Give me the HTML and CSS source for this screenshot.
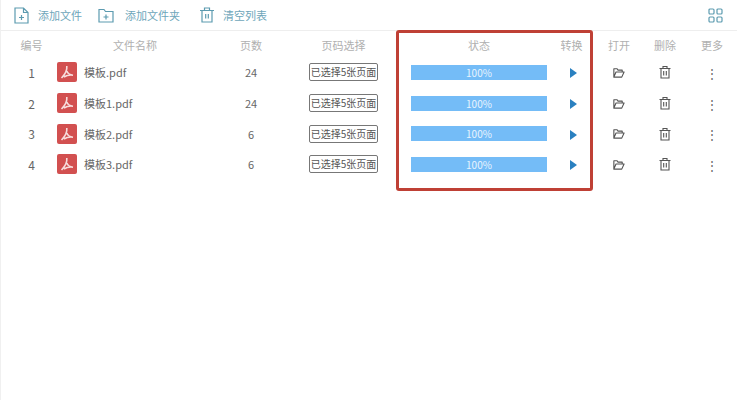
FILE: index.html
```html
<!DOCTYPE html>
<html lang="zh-CN">
<head>
    <meta charset="UTF-8">
    <meta name="viewport" content="width=device-width, initial-scale=1.0">
    <title>PDF</title>
    <link rel="stylesheet" href="styles.css">
</head>
<body>
    <svg class="defs" width="0" height="0">
        <symbol id="pdf" viewBox="0 0 20 20">
            <path d="M9.800 4c.4 3.500-1.800 8.500-5.300 12M9.800 9c1 2.500 3 4 6.200 4.200c-3-.4-6.500.2-9 1.800" fill="none" stroke="#f7dddd" stroke-width="1.600"/>
        </symbol>
        <symbol id="folder" viewBox="0 0 14 14">
            <path d="M2 12V3h3.500l1 1.500h4.500V6.500M2 12h8.500L13 6.500H4.300L2 12z" fill="none" stroke="#555" stroke-width="1.200" stroke-linejoin="round"/>
        </symbol>
        <symbol id="trash" viewBox="0 0 14 14">
            <path d="M1.500 3.500h11M5 3.500V1.500h4v2M3 3.500V13h8V3.500M5.700 6v4.500M8.300 6v4.500" fill="none" stroke="#555" stroke-width="1.100"/>
        </symbol>
    </svg>

    <div class="toolbar">
        <a class="tool">
            <svg width="15" height="17" viewBox="0 0 15 17"><path d="M1 1h8.500L14 5.500V16H1zM9.500 1v4.500H14M5 10.500h5M7.500 8v5" fill="none" stroke="#5c9bb0" stroke-width="1.200"/></svg>
            <span>添加文件</span>
        </a>
        <a class="tool tool-folder">
            <svg width="16" height="15" viewBox="0 0 16 15"><path d="M1 1.500h5l1.500 2H15V14H1zM5.500 9h5M8 6.500v5" fill="none" stroke="#5c9bb0" stroke-width="1.200"/></svg>
            <span>添加文件夹</span>
        </a>
        <a class="tool tool-clear">
            <svg width="14" height="16" viewBox="0 0 14 16"><path d="M0 3.500h14M4.500 3V1h5v2M2 3.500V15h10V3.500M5.700 7v4.500M8.300 7v4.500" fill="none" stroke="#5c9bb0" stroke-width="1.200"/></svg>
            <span>清空列表</span>
        </a>
        <svg class="view-switch" width="15" height="15" viewBox="0 0 15 15">
            <g fill="none" stroke="#5c9bb0" stroke-width="1.200">
                <rect x="1" y="1" width="5" height="5" rx="1"/>
                <rect x="9" y="1" width="5" height="5" rx="1"/>
                <rect x="1" y="9" width="5" height="5" rx="1"/>
                <rect x="9" y="9" width="5" height="5" rx="1"/>
            </g>
        </svg>
    </div>

    <div class="list">
        <div class="row head">
            <div class="num">编号</div>
            <div>文件名称</div>
            <div>页数</div>
            <div class="col-select">页码选择</div>
            <div>状态</div>
            <div>转换</div>
            <div>打开</div>
            <div>删除</div>
            <div>更多</div>
        </div>

        <div class="row">
            <div class="num">1</div>
            <div class="name"><svg class="pdf" width="20" height="20"><use href="#pdf"/></svg>模板.pdf</div>
            <div>24</div>
            <div class="col-select"><span class="pages">已选择5张页面</span></div>
            <div class="bar">100%</div>
            <div><span class="play"></span></div>
            <div><svg class="open" width="13" height="13"><use href="#folder"/></svg></div>
            <div><svg width="14" height="14"><use href="#trash"/></svg></div>
            <div class="more">⋮</div>
        </div>
        <div class="row">
            <div class="num">2</div>
            <div class="name"><svg class="pdf" width="20" height="20"><use href="#pdf"/></svg>模板1.pdf</div>
            <div>24</div>
            <div class="col-select"><span class="pages">已选择5张页面</span></div>
            <div class="bar">100%</div>
            <div><span class="play"></span></div>
            <div><svg class="open" width="13" height="13"><use href="#folder"/></svg></div>
            <div><svg width="14" height="14"><use href="#trash"/></svg></div>
            <div class="more">⋮</div>
        </div>
        <div class="row">
            <div class="num">3</div>
            <div class="name"><svg class="pdf" width="20" height="20"><use href="#pdf"/></svg>模板2.pdf</div>
            <div>6</div>
            <div class="col-select"><span class="pages">已选择5张页面</span></div>
            <div class="bar">100%</div>
            <div><span class="play"></span></div>
            <div><svg class="open" width="13" height="13"><use href="#folder"/></svg></div>
            <div><svg width="14" height="14"><use href="#trash"/></svg></div>
            <div class="more">⋮</div>
        </div>
        <div class="row">
            <div class="num">4</div>
            <div class="name"><svg class="pdf" width="20" height="20"><use href="#pdf"/></svg>模板3.pdf</div>
            <div>6</div>
            <div class="col-select"><span class="pages">已选择5张页面</span></div>
            <div class="bar">100%</div>
            <div><span class="play"></span></div>
            <div><svg class="open" width="13" height="13"><use href="#folder"/></svg></div>
            <div><svg width="14" height="14"><use href="#trash"/></svg></div>
            <div class="more">⋮</div>
        </div>

        <!-- rote Markierung liegt ueber der Tabelle -->
        <div class="marker"></div>
    </div>
</body>
</html>
```

FILE: styles.css
```css
body {
    margin: 0;
    height: 400px;
    overflow: hidden;
    background-color: #ffffff;
    color: #666666;
    font-family: "Noto Sans CJK SC", "Noto Sans", sans-serif;
    font-size: 11px;
    border-left: 1px solid #f0f0f0;
    box-sizing: border-box;
}

.defs {
    position: absolute;
}

.toolbar {
    display: flex;
    align-items: center;
    height: 31px;
    padding: 0 14px 0 13px;
    border-bottom: 1px solid #eeeeee;
    box-sizing: border-box;
}

.tool {
    display: flex;
    align-items: center;
    margin-right: 16px;
    color: #6ea6ba;
}

.tool svg {
    margin-right: 9px;
}

.tool-folder svg {
    margin-right: 11px;
}

.tool-clear {
    margin-left: 4px;
}

.view-switch {
    margin-left: auto;
}

.list {
    position: relative;
}

.row {
    display: grid;
    grid-template-columns: 56px 156px 76px 122px 136px 49px 46px 46px 48px;
    align-items: center;
    height: 30.7px;
    text-align: center;
}

.row.head {
    height: 26px;
    padding-top: 2px;
    box-sizing: border-box;
    color: #b0b0b0;
}

.row svg {
    display: block;
    margin: 0 auto;
}

.col-select {
    padding-right: 13px;
}

.num {
    padding-left: 5px;
    box-sizing: border-box;
    font-size: 12px;
}

.head .num {
    font-size: 11px;
}

.name {
    display: flex;
    align-items: center;
    text-align: left;
}

.row .pdf {
    margin: 0 7px 0 0;
    background-color: #d25050;
    border-radius: 2px;
}

.pages {
    display: inline-block;
    padding: 0 1px;
    line-height: 16px;
    border: 1px solid #777777;
    border-radius: 2px;
    font-size: 10px;
    color: #555555;
}

.bar {
    height: 15px;
    line-height: 15px;
    background-color: #74bcf7;
    color: #e8f4fe;
    font-size: 10px;
}

.play {
    display: block;
    width: 0;
    margin: 2px 19px 0 auto;
    border-left: 7px solid #2a80c0;
    border-top: 5px solid transparent;
    border-bottom: 5px solid transparent;
}

.row .open {
    position: relative;
    left: -1px;
}

.more {
    font-size: 12px;
    color: #666666;
}

.marker {
    position: absolute;
    left: 395px;
    top: -1px;
    width: 197px;
    height: 161px;
    border: 3px solid #bf4035;
    border-radius: 3px;
    box-sizing: border-box;
}
```
